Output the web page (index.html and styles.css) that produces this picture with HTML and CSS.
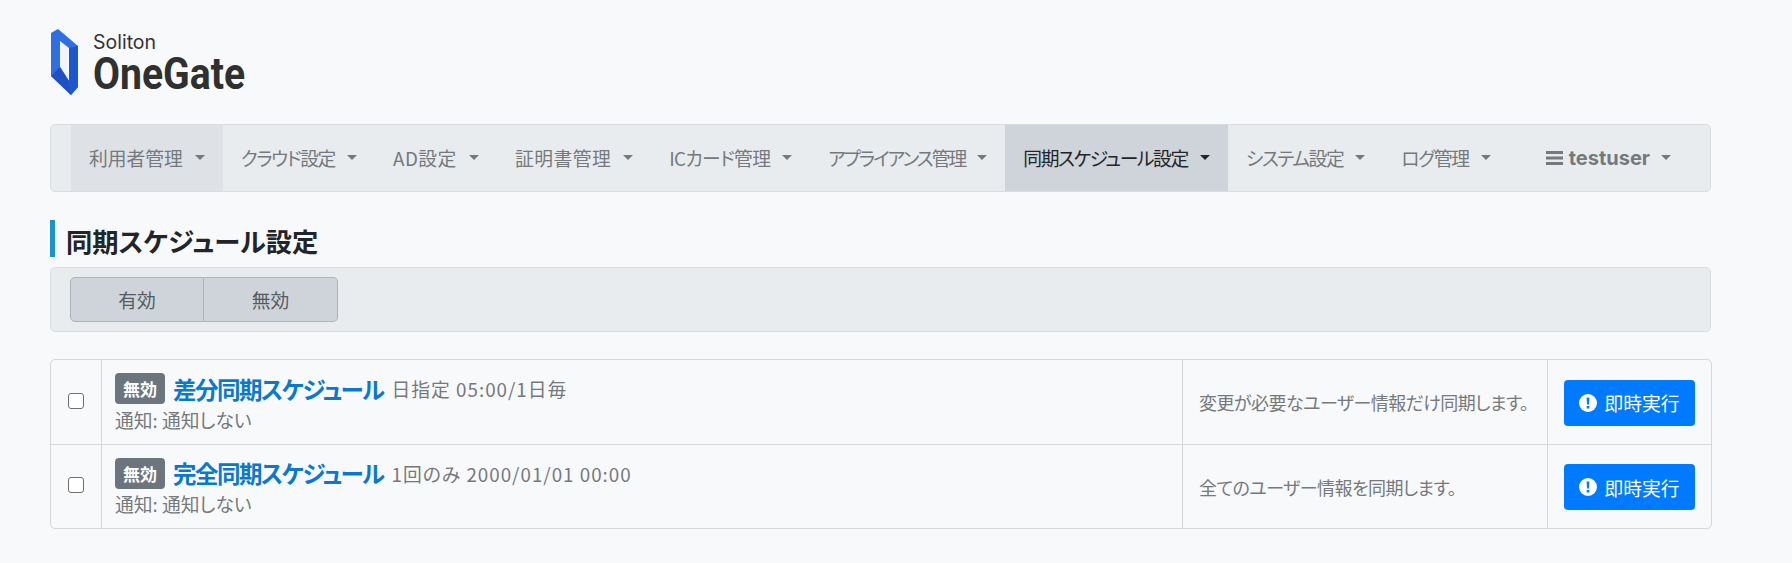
FILE: index.html
```html
<!DOCTYPE html>
<html lang="ja">
<head>
<meta charset="utf-8">
<title>同期スケジュール設定</title>
<link rel="stylesheet" href="styles.css">
</head>
<body>
<div class="page">
  <header class="logo">
    <svg class="logo-mark" width="30" height="68" viewBox="0 0 30 68">
      <path fill="#2f6fe0" d="M1 4 8 0 28 17V58L21 66 1 47Z"/>
      <path fill="#f1f4f9" d="M10 12 19 19V52L10 38Z"/>
      <path fill="#1f4fc0" d="M1 47 10 38 19 52 21 66Z"/>
      <path fill="#1d57cf" d="M21 66 28 58V17L19 19V52Z"/>
    </svg>
    <div class="logo-text">
      <span class="logo-small">Soliton</span>
      <span class="logo-big">OneGate</span>
    </div>
  </header>

  <nav class="navbar">
    <a class="nav-item hover">利用者管理<i class="caret"></i></a>
    <a class="nav-item kana-s">クラウド設定<i class="caret"></i></a>
    <a class="nav-item latin">AD設定<i class="caret"></i></a>
    <a class="nav-item latin">証明書管理<i class="caret"></i></a>
    <a class="nav-item kana-xs">ICカード管理<i class="caret"></i></a>
    <a class="nav-item kana-l">アプライアンス管理<i class="caret"></i></a>
    <a class="nav-item active kana-m">同期スケジュール設定<i class="caret"></i></a>
    <a class="nav-item kana-s">システム設定<i class="caret"></i></a>
    <a class="nav-item kana-s">ログ管理<i class="caret"></i></a>
    <a class="nav-item user">
      <svg class="bars" width="17" height="14" viewBox="0 0 17 14"><path fill="currentColor" d="M0 0h17v3H0zM0 5.500h17v3H0zM0 11h17v3H0z"/></svg>
      testuser<i class="caret"></i></a>
  </nav>

  <h1 class="title">同期スケジュール設定</h1>

  <div class="toolbar">
    <div class="btn-group">
      <button class="tool-btn">有効</button>
      <button class="tool-btn">無効</button>
    </div>
  </div>

  <div class="table">
    <div class="row">
      <div class="cell cell-check"><span class="check"></span></div>
      <div class="cell cell-main">
        <div class="head-line"><span class="badge">無効</span><a class="name">差分同期スケジュール</a><span class="sched">日指定 05:00/1日毎</span></div>
        <div class="notify">通知: 通知しない</div>
      </div>
      <div class="cell cell-desc">変更が必要なユーザー情報だけ同期します。</div>
      <div class="cell cell-action"><button class="run"><svg class="alert" width="18" height="18" viewBox="0 0 18 18"><circle cx="9" cy="9" r="9" fill="#fff"/><path fill="#007bff" d="M7.600 3.500h2.800l-.4 7H8zM7.700 12h2.600v2.600H7.700z"/></svg>即時実行</button></div>
    </div>
    <div class="row">
      <div class="cell cell-check"><span class="check"></span></div>
      <div class="cell cell-main">
        <div class="head-line"><span class="badge">無効</span><a class="name">完全同期スケジュール</a><span class="sched">1回のみ 2000/01/01 00:00</span></div>
        <div class="notify">通知: 通知しない</div>
      </div>
      <div class="cell cell-desc">全てのユーザー情報を同期します。</div>
      <div class="cell cell-action"><button class="run"><svg class="alert" width="18" height="18" viewBox="0 0 18 18"><circle cx="9" cy="9" r="9" fill="#fff"/><path fill="#007bff" d="M7.600 3.500h2.800l-.4 7H8zM7.700 12h2.600v2.600H7.700z"/></svg>即時実行</button></div>
    </div>
  </div>
</div>
</body>
</html>
```
FILE: styles.css
```css
* { box-sizing: border-box; }
html, body { margin: 0; height: 100%; }
body {
  background: #f8f9fa;
  color: #212529;
  font-family: "Noto Sans CJK JP", sans-serif;
  font-feature-settings: "palt" 1;
  font-size: 18.8px;
  overflow: hidden;
}
.page { width: 1712px; padding: 29px 0 0 50px; }

.logo { display: flex; height: 95px; align-items: flex-start; }
.logo-mark { display: block; flex: none; }
.logo-text { margin-left: 13px; display: flex; flex-direction: column; }
.logo-small { font: 400 19.500px/22px Inter, sans-serif; color: #333; margin-top: 2px; }
.logo-big {
  font: 700 45px/40px Roboto, sans-serif;
  color: #2f3030;
  transform: scaleX(.87);
  transform-origin: left;
  margin-top: 1px;
}

.navbar {
  display: flex;
  height: 68px;
  padding-left: 20px;
  background: #e9ecef;
  border: 1px solid #dadde1;
  border-radius: 5px;
  width: 1661px;
}
.nav-item {
  display: flex;
  align-items: center;
  height: 100%;
  padding: 0 18px 1px;
  color: #75797d;
  white-space: nowrap;
}
.nav-item.hover { background: #dee2e6; }
.nav-item.active { background: #ced4da; color: #212529; }
.nav-item.kana-xs { letter-spacing: -.7px; }
.nav-item.kana-s { letter-spacing: -1.4px; }
.nav-item.kana-m { letter-spacing: -1.4px; }
.nav-item.kana-l { letter-spacing: -2px; }
.nav-item.latin { letter-spacing: .5px; }
.nav-item.user { margin-left: 19px; font-family: Inter, sans-serif; font-weight: 700; font-size: 20px; gap: 6px; }
.caret {
  display: block;
  margin-left: 12px;
  border-top: 5px solid currentColor;
  border-left: 5px solid transparent;
  border-right: 5px solid transparent;
}
.user .caret { margin-left: 5px; }
.bars { display: block; }

.title {
  margin: 28px 0 0;
  height: 37px;
  border-left: 5px solid #1a93cc;
  padding-left: 11px;
  font-size: 26.300px;
  font-weight: 700;
  line-height: 42px;
  color: #212529;
  white-space: nowrap;
}

.toolbar {
  margin-top: 10px;
  width: 1661px;
  height: 65px;
  background: #e9ecef;
  border: 1px solid #dadde1;
  border-radius: 5px;
  padding: 9px 19px;
}
.btn-group { display: flex; width: 268px; height: 45px; }
.tool-btn {
  flex: 1;
  background: #ced4da;
  border: 1px solid #aeb4ba;
  color: #555b60;
  font: inherit;
  font-feature-settings: inherit;
  padding: 0;
}
.tool-btn:first-child { flex: 0 0 134px; border-radius: 5px 0 0 5px; }
.tool-btn:last-child { border-radius: 0 5px 5px 0; border-left: 0; }

.table {
  margin-top: 27px;
  width: 1662px;
  border: 1px solid #d5d8db;
  border-radius: 5px;
}
.row {
  display: grid;
  grid-template-columns: 50px 1081px 365px 1fr;
  height: 84px;
}
.row + .row { border-top: 1px solid #d5d8db; }
.cell { display: flex; align-items: center; }
.cell + .cell { border-left: 1px solid #d5d8db; }
.cell-check { justify-content: center; }
.check {
  display: block;
  width: 16px;
  height: 16px;
  background: #fff;
  border: 1px solid #707070;
  border-radius: 3px;
  margin-bottom: 3px;
}
.cell-main { flex-direction: column; align-items: flex-start; justify-content: center; padding-left: 13px; }
.head-line { display: flex; align-items: center; height: 32px; }
.badge {
  background: #6c757d;
  color: #fff;
  font-size: 17px;
  font-weight: 700;
  width: 50px;
  height: 31px;
  border-radius: 4px;
  display: flex;
  align-items: center;
  justify-content: center;
}
.name { color: #0b78cf; font-size: 23.500px; font-weight: 700; letter-spacing: -1.5px; margin-left: 8px; white-space: nowrap; }
.sched { color: #75797d; margin-left: 8px; letter-spacing: 1px; white-space: nowrap; }
.notify { color: #75797d; font-size: 18.800px; margin-top: 3px; line-height: 24px; }
.cell-desc { color: #75797d; font-size: 18px; letter-spacing: -.55px; padding-left: 16px; white-space: nowrap; }
.cell-action { justify-content: center; }
.run {
  display: flex;
  align-items: center;
  justify-content: center;
  gap: 7px;
  width: 131px;
  height: 46px;
  margin-top: 1px;
  background: #007bff;
  color: #fff;
  border: 0;
  border-radius: 4px;
  font: inherit;
  font-feature-settings: inherit;
  padding: 0;
}
.alert { display: block; }
```
